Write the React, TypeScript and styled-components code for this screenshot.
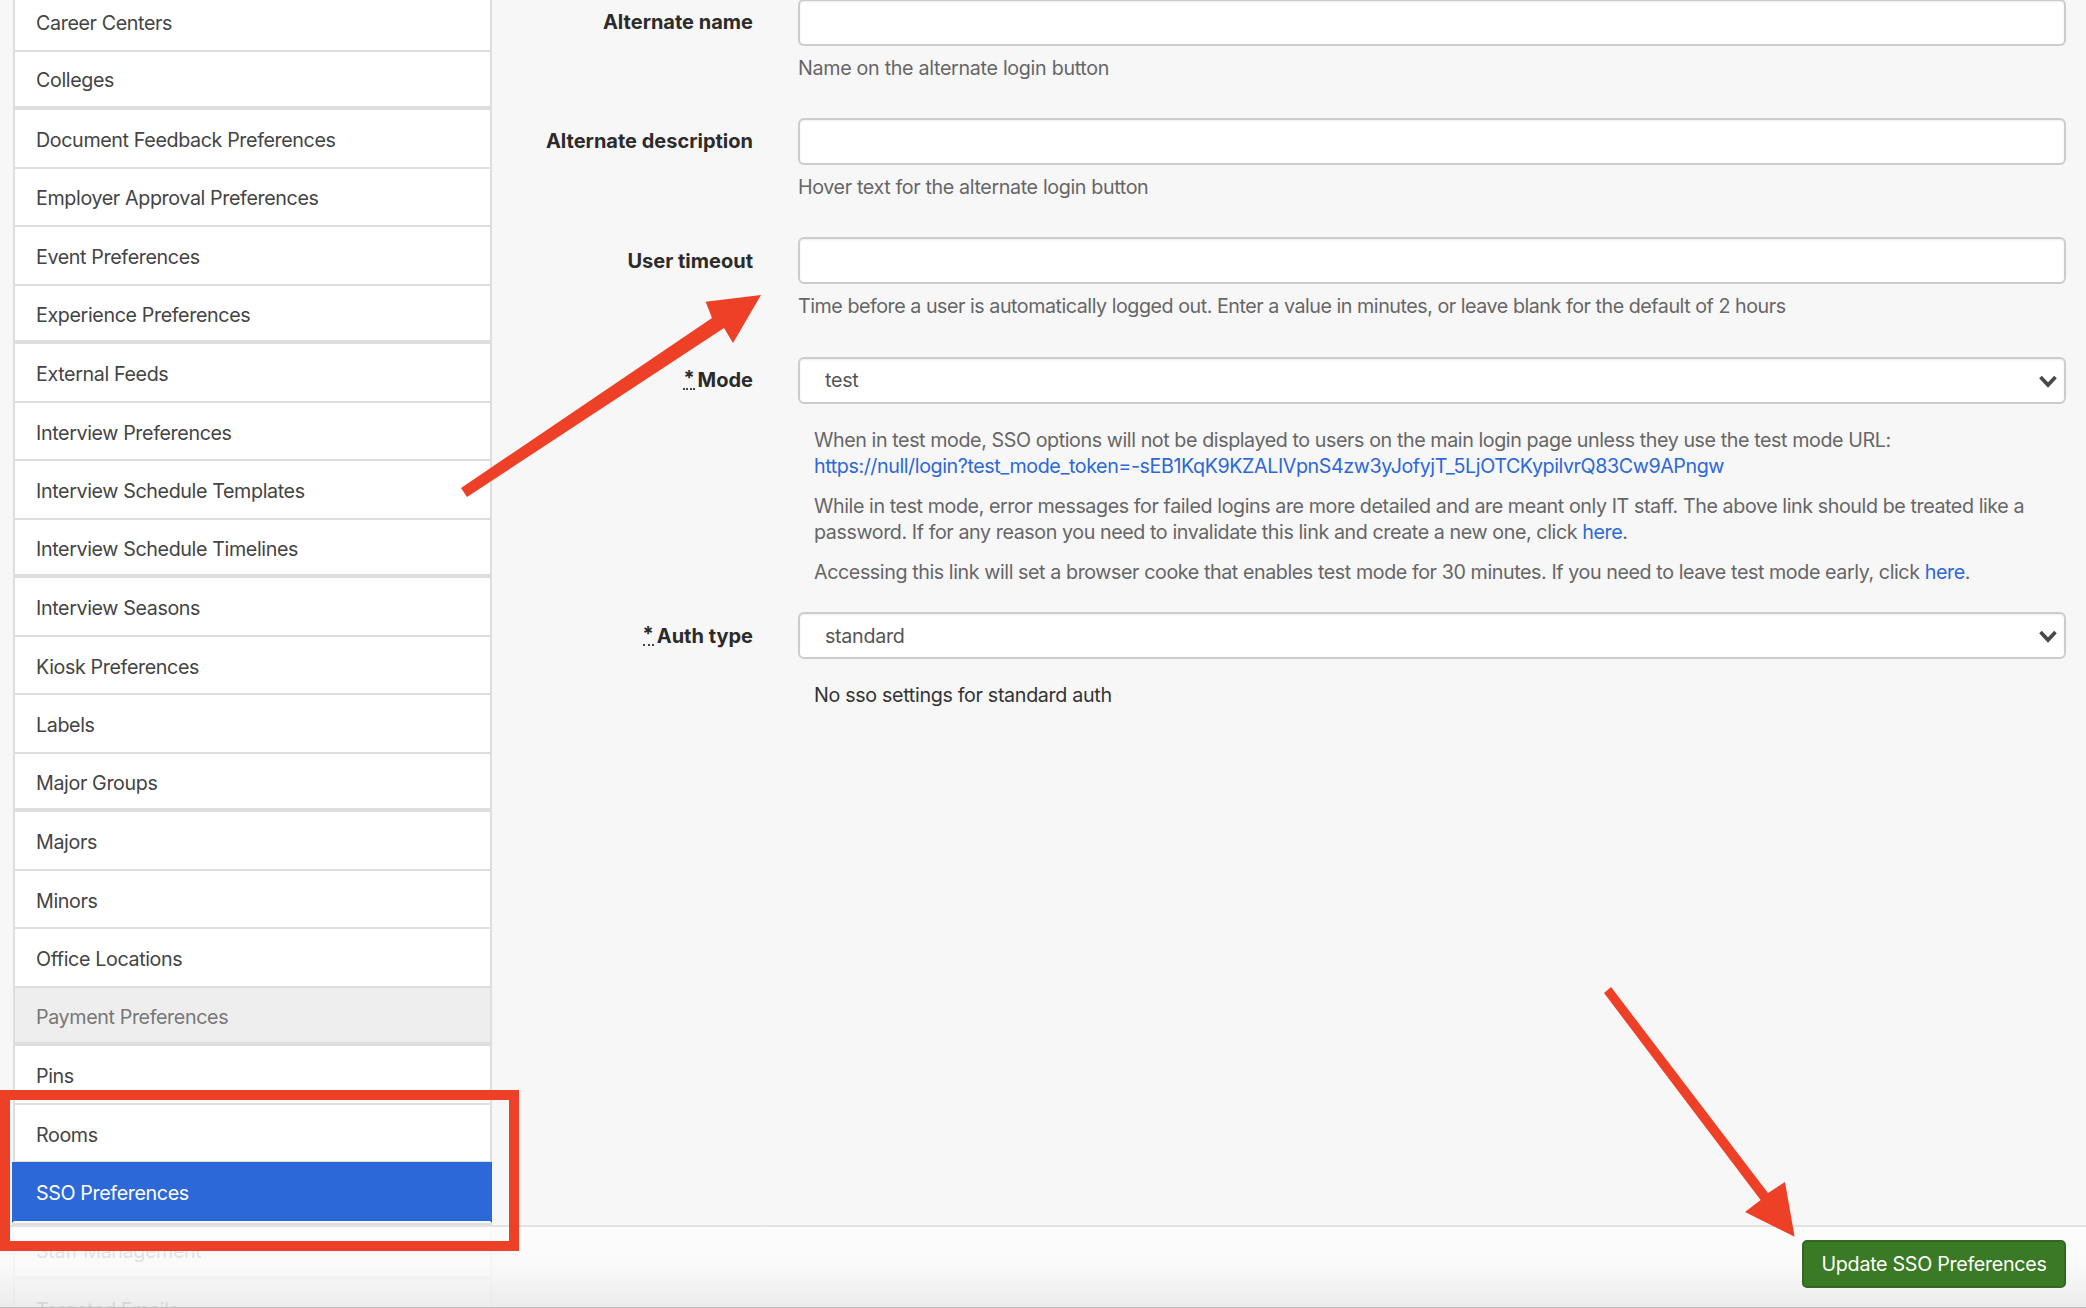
import React from "react";
import styled, { createGlobalStyle } from "styled-components";

const Global = createGlobalStyle`
  html, body { margin: 0; padding: 0; background: #f7f7f7; }
  body { font-family: Inter, "Liberation Sans", sans-serif; font-size: 19.7px; color: #333; }
  * { box-sizing: border-box; }
`;

const Page = styled.div`
  position: relative;
  width: 2086px;
  height: 1308px;
  overflow: hidden;
  display: flex;
  align-items: flex-start;
  background: #f7f7f7;
`;

const Sidebar = styled.nav`
  flex: 0 0 479px;
  margin: -7.03px 0 0 13px;
  display: flex;
  flex-direction: column;
`;

const Row = styled.a<{ $thick?: boolean; $muted?: boolean; $active?: boolean }>`
  height: 58.53px;
  flex: none;
  display: flex;
  align-items: center;
  padding: 3.4px 0 0 21px;
  font-size: 19.7px;
  letter-spacing: -0.38px;
  color: ${(p) => (p.$active ? "#fff" : p.$muted ? "#777" : "#444")};
  background: ${(p) => (p.$active ? "#2c68d8" : p.$muted ? "#eee" : "#fff")};
  border-style: solid;
  border-color: #dedede;
  border-width: 0 2px ${(p) => (p.$thick ? "4px" : "2px")} 2px;
  ${(p) =>
    p.$active &&
    `position: relative;
     z-index: 1;
     height: 60.53px;
     margin: -1px 0 -1px -1px;
     padding-left: 22px;
     border-color: #2c68d8 #2c68d8 #fafafa;
     box-shadow: 0 2px 0 #dedede;`}
`;

const Content = styled.main`
  flex: 1;
  margin-top: -1.4px;
  padding-right: 20px;
  display: grid;
  grid-template-columns: 262px 1fr;
  column-gap: 44px;
  align-content: start;
`;

const Label = styled.label`
  height: 47px;
  padding-right: 1px;
  display: flex;
  align-items: center;
  justify-content: flex-end;
  gap: 3px;
  font-weight: 700;
  font-size: 20px;
  letter-spacing: 0;
  color: #2b2b2b;
`;

const Req = styled.abbr`
  text-decoration: none;
  border-bottom: 2px dotted #444;
  line-height: 16px;
  height: 20px;
`;

const Field = styled.div<{ $gap?: number }>`
  margin-bottom: ${(p) => p.$gap ?? 0}px;
`;

const TextInput = styled.input`
  display: block;
  width: 100%;
  height: 47px;
  border: 2px solid #ccc;
  border-radius: 6px;
  background: #fff;
  box-shadow: inset 0 1px 2px rgba(0, 0, 0, 0.07);
  outline: none;
`;

const SelectWrap = styled.div`
  position: relative;
  height: 47px;
`;

const Select = styled.select`
  appearance: none;
  display: block;
  width: 100%;
  height: 100%;
  padding: 0 40px 0 25px;
  border: 2px solid #ccc;
  border-radius: 6px;
  background: #fff;
  box-shadow: inset 0 1px 2px rgba(0, 0, 0, 0.07);
  font: 400 19.7px Inter, "Liberation Sans", sans-serif;
  letter-spacing: -0.3px;
  color: #555;
  outline: none;
`;

const Chevron = styled.svg`
  position: absolute;
  right: 8px;
  top: 17px;
  width: 20px;
  height: 14px;
  pointer-events: none;
`;

const Help = styled.p<{ $tracking: number }>`
  margin: 9px 0 0;
  font-size: 19.7px;
  line-height: 26.5px;
  letter-spacing: ${(p) => p.$tracking}px;
  color: #666;
`;

const Notes = styled.div<{ $top: number }>`
  margin-top: ${(p) => p.$top}px;
  padding: 0 16px;
  display: flex;
  flex-direction: column;
  gap: 13px;
`;

const Note = styled.p`
  margin: 0;
  font-size: 19.7px;
  line-height: 26.5px;
  letter-spacing: -0.42px;
  color: #666;
`;

const Plain = styled(Note)`
  letter-spacing: -0.33px;
  color: #333;
`;

const Link = styled.a`
  color: #2c68d8;
`;

const Footer = styled.footer`
  position: absolute;
  left: 0;
  right: 0;
  bottom: 0;
  height: 83px;
  display: flex;
  justify-content: flex-end;
  padding: 13px 20px 0 0;
  border-top: 2px solid #e3e3e3;
  border-bottom: 1px solid #bdbdbd;
  background: linear-gradient(rgba(253, 253, 253, 0.9), rgba(249, 249, 249, 0.85) 50%, rgba(234, 234, 234, 0.88));
`;

const SubmitButton = styled.button`
  width: 264px;
  height: 48px;
  border: 2px solid #2f6a1f;
  border-radius: 5px;
  background: #3a7a24;
  color: #fff;
  font: 400 19.7px Inter, "Liberation Sans", sans-serif;
  letter-spacing: -0.3px;
`;

const Frame = styled.div`
  position: absolute;
  left: 0;
  top: 1090px;
  width: 519px;
  height: 161px;
  border: 10px solid #ee4026;
`;

const Annotations = styled.svg`
  position: absolute;
  inset: 0;
  width: 2086px;
  height: 1308px;
  pointer-events: none;
`;

const items = [
  "Career Centers", "Colleges", "Document Feedback Preferences", "Employer Approval Preferences",
  "Event Preferences", "Experience Preferences", "External Feeds", "Interview Preferences",
  "Interview Schedule Templates", "Interview Schedule Timelines", "Interview Seasons", "Kiosk Preferences",
  "Labels", "Major Groups", "Majors", "Minors", "Office Locations", "Payment Preferences", "Pins",
  "Rooms", "SSO Preferences", "Staff Management", "Targeted Emails",
];

const Arrow = () => (
  <Chevron viewBox="0 0 20 14" aria-hidden="true">
    <path d="M2.5 3 L10 11 L17.5 3" fill="none" stroke="#484848" strokeWidth="3.6" />
  </Chevron>
);

export default function App() {
  return (
    <Page>
      <Global />
      <Sidebar>
        {items.map((name, i) => (
          <Row key={name} $thick={i % 4 === 1} $muted={name === "Payment Preferences"} $active={name === "SSO Preferences"}>
            {name}
          </Row>
        ))}
      </Sidebar>
      <Content>
        <Label>Alternate name</Label>
        <Field $gap={36.83}>
          <TextInput />
          <Help $tracking={-0.31}>Name on the alternate login button</Help>
        </Field>
        <Label>Alternate description</Label>
        <Field $gap={36.83}>
          <TextInput />
          <Help $tracking={-0.37}>Hover text for the alternate login button</Help>
        </Field>
        <Label>User timeout</Label>
        <Field $gap={36.83}>
          <TextInput />
          <Help $tracking={-0.47}>Time before a user is automatically logged out. Enter a value in minutes, or leave blank for the default of 2 hours</Help>
        </Field>
        <Label><Req title="required">*</Req>Mode</Label>
        <Field $gap={27}>
          <SelectWrap>
            <Select defaultValue="test"><option>test</option></Select>
            <Arrow />
          </SelectWrap>
          <Notes $top={23}>
            <Note>
              When in test mode, SSO options will not be displayed to users on the main login page unless they use the test mode URL:<br />
              <Link>https://null/login?test_mode_token=-sEB1KqK9KZALIVpnS4zw3yJofyjT_5LjOTCKypilvrQ83Cw9APngw</Link>
            </Note>
            <Note>
              While in test mode, error messages for failed logins are more detailed and are meant only IT staff. The above link should be treated like a password. If for any reason you need to invalidate this link and create a new one, click <Link>here</Link>.
            </Note>
            <Note>
              Accessing this link will set a browser cooke that enables test mode for 30 minutes. If you need to leave test mode early, click <Link>here</Link>.
            </Note>
          </Notes>
        </Field>
        <Label><Req title="required">*</Req>Auth type</Label>
        <Field>
          <SelectWrap>
            <Select defaultValue="standard"><option>standard</option></Select>
            <Arrow />
          </SelectWrap>
          <Notes $top={23}>
            <Plain>No sso settings for standard auth</Plain>
          </Notes>
        </Field>
      </Content>
      <Footer>
        <SubmitButton>Update SSO Preferences</SubmitButton>
      </Footer>
      <Frame />
      <Annotations viewBox="0 0 2086 1308" aria-hidden="true">
        <polygon fill="#ee4026" points="461,488 467,497 724,328 733,343 761,295 705.6,301.7 712,318" />
        <polygon fill="#ee4026" points="1604,993 1611,987 1768,1193 1785,1182 1794.6,1236.7 1745,1212 1760.6,1200" />
      </Annotations>
    </Page>
  );
}
